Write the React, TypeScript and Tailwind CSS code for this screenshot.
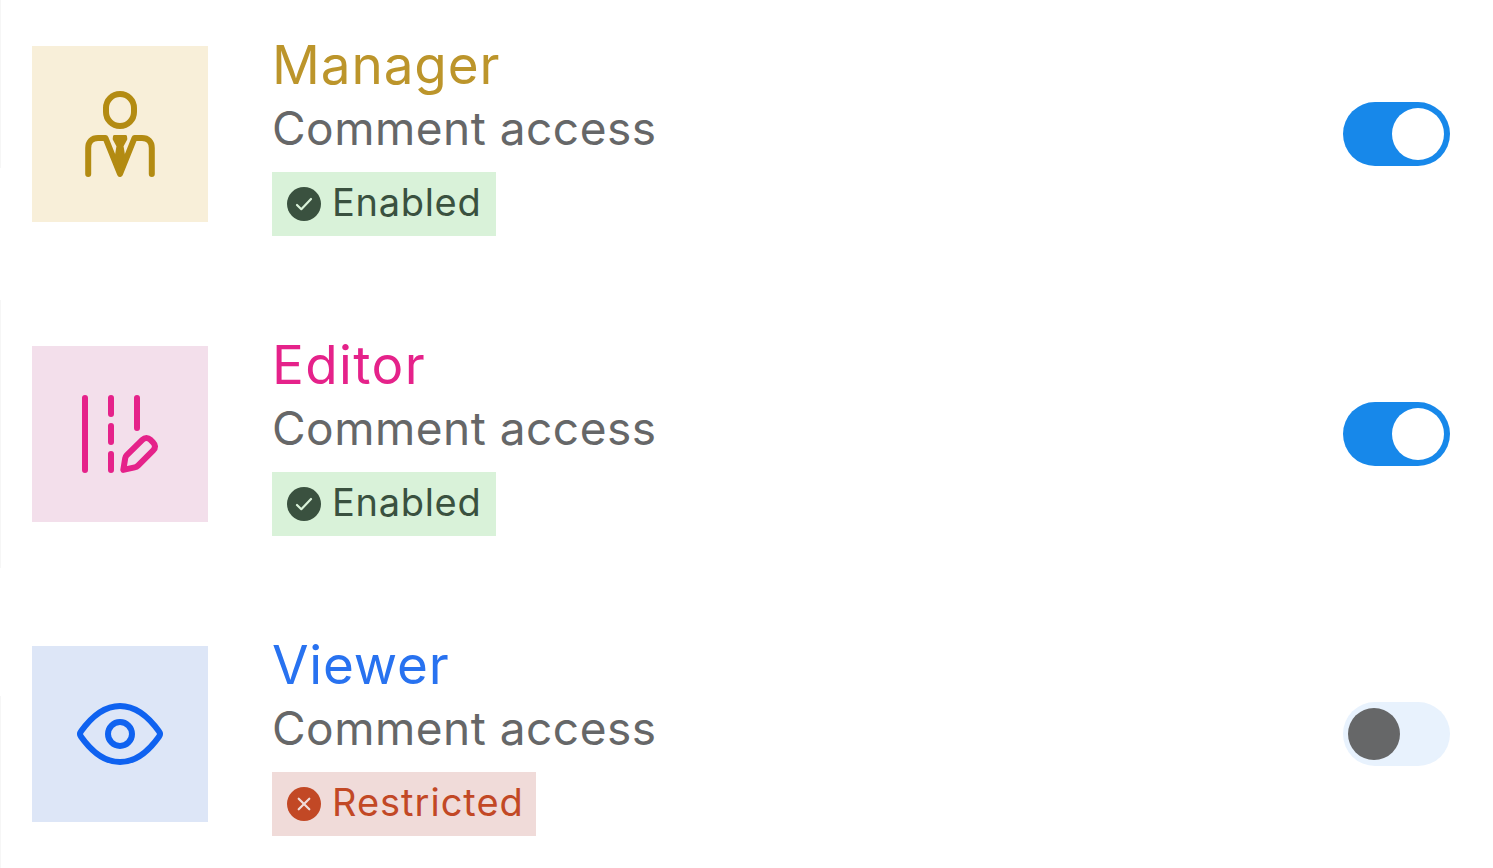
import React from 'react';

const ManagerIcon = () => (
  <svg width="96" height="96" viewBox="0 0 96 96" fill="none" stroke="#b38b12" strokeWidth="6" strokeLinecap="round" strokeLinejoin="round">
    <rect x="34" y="8" width="28" height="32" rx="14" />
    <path d="M16.2 88V62C16.2 55.5 20 52 26 52H33.5L48 88L62.5 52H70C76 52 79.8 55.5 79.8 62V88" />
    <path d="M42.5 50.5H53.5L53.8 53L50 60L52 72L48 88L44 72L46 60L42.2 53Z" fill="#b38b12" strokeWidth="3" />
  </svg>
);

const EditorIcon = () => (
  <svg width="96" height="96" viewBox="0 0 96 96" fill="none" stroke="#e5228a" strokeWidth="6" strokeLinecap="round" strokeLinejoin="round">
    <path d="M13 12V84M39 12V28M39 40V56M39 68V84M65 12V42" />
    <path d="M51.3 83.9L53.2 72.2Q53.5 70.5 54.8 69.2L70.3 53.8C73 51.2 76 51.4 78.3 53.7L81 56.4C83.6 59 83.8 61.8 81.2 64.4L66 79.7Q64.6 81.1 62.7 81.4Z" />
  </svg>
);

const ViewerIcon = () => (
  <svg width="96" height="96" viewBox="0 0 96 96" fill="none" stroke="#0f62f0" strokeWidth="6" strokeLinecap="round" strokeLinejoin="round">
    <circle cx="48" cy="48" r="12" />
    <path d="M8.9 45.6C15 37 29 20 48 20S81 37 87.1 45.6Q88.9 48 87.1 50.4C81 59 67 76 48 76S15 59 8.9 50.4Q7.1 48 8.9 45.6Z" />
  </svg>
);

const roles = [
  {
    name: 'Manager',
    nameClass: 'text-[#bc952b] tracking-[0.9px]',
    tileClass: 'bg-[#f8efd9]',
    icon: <ManagerIcon />,
    enabled: true,
  },
  {
    name: 'Editor',
    nameClass: 'text-[#e5228a] tracking-[1.4px]',
    tileClass: 'bg-[#f3dfeb]',
    icon: <EditorIcon />,
    enabled: true,
  },
  {
    name: 'Viewer',
    nameClass: 'text-[#2872f0] tracking-[0.8px]',
    tileClass: 'bg-[#dde6f7]',
    icon: <ViewerIcon />,
    enabled: false,
  },
];

const StatusTag = ({ enabled }: { enabled: boolean }) => (
  <div
    className={
      enabled
        ? 'flex items-center h-16 w-[224px] pl-[15px] bg-[#d9f2d9] text-[#3a513f] tracking-[0.7px]'
        : 'flex items-center h-16 w-[264px] pl-[15px] bg-[#f0dbd9] text-[#c24825] tracking-[1px]'
    }
  >
    <svg className="shrink-0" width="34" height="34" viewBox="0 0 34 34" fill="none" strokeWidth="2.2" strokeLinecap="round" strokeLinejoin="round">
      <circle cx="17" cy="17" r="17" fill="currentColor" />
      <path d={enabled ? 'M10 18L14.3 22.2L24 12' : 'M11.7 11.7L22.3 22.3M22.3 11.7L11.7 22.3'} stroke={enabled ? '#d9f2d9' : '#f0dbd9'} />
    </svg>
    <span className="ml-[11px] mb-[4px] text-[38px] leading-none whitespace-nowrap">
      {enabled ? 'Enabled' : 'Restricted'}
    </span>
  </div>
);

const Toggle = ({ checked }: { checked: boolean }) => (
  <button
    role="switch"
    aria-checked={checked}
    className={
      checked
        ? 'flex items-center justify-end w-[107px] h-16 px-[6px] rounded-full bg-[#1788ea] cursor-pointer'
        : 'flex items-center justify-start w-[107px] h-16 px-[5px] rounded-full bg-[#e8f2fd] cursor-pointer'
    }
  >
    <span className={checked ? 'size-[52px] rounded-full bg-white' : 'size-[52px] rounded-full bg-[#666768]'} />
  </button>
);

export default function App() {
  return (
    <div className="flex w-full h-[868px] overflow-hidden bg-white font-['Inter',sans-serif]">
      <div className="w-px shrink-0">
        <div className="h-[168px] bg-[#f6f6f6]" />
        <div className="h-[268px] mt-[132px] bg-[#f6f6f6]" />
        <div className="h-[172px] mt-32 bg-[#f6f6f6]" />
      </div>
      <div className="flex-1">
        {roles.map((role) => (
          <div key={role.name} className="flex h-[300px] pl-[31px] pr-[43px]">
            <div className={`flex items-center justify-center size-44 mt-[46px] shrink-0 ${role.tileClass}`}>
              {role.icon}
            </div>
            <div className="flex-1 ml-16 pt-8">
              <h2 className={`h-[68px] text-[53px] leading-[67px] ${role.nameClass}`}>{role.name}</h2>
              <p className="h-[60px] mb-3 text-[46px] leading-[56px] tracking-[0.5px] text-[#666768]">Comment access</p>
              <StatusTag enabled={role.enabled} />
            </div>
            <div className="mt-[102px]">
              <Toggle checked={role.enabled} />
            </div>
          </div>
        ))}
      </div>
    </div>
  );
}
